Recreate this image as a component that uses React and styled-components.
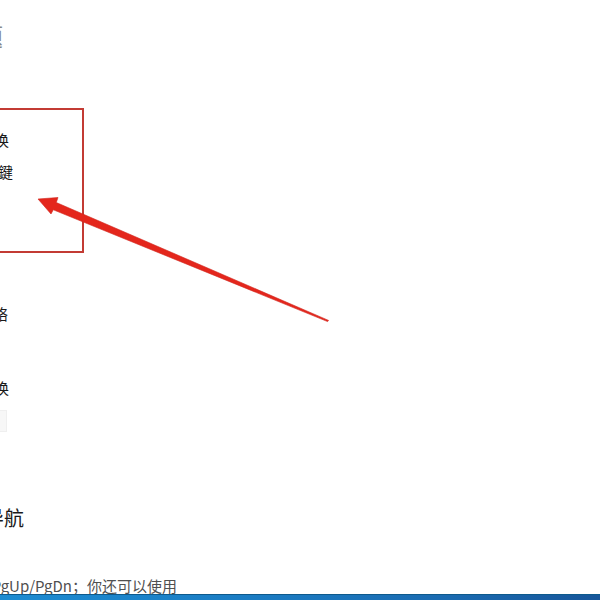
import React from "react";
import styled, { createGlobalStyle } from "styled-components";

const Global = createGlobalStyle`
  html, body { margin: 0; padding: 0; background: #fff; }
  body { font-family: "Microsoft YaHei", "Noto Sans CJK SC", "Liberation Sans", sans-serif; }
`;

const Page = styled.div`
  position: relative;
  width: 600px;
  height: 600px;
  overflow: hidden;
  display: flex;
  flex-direction: column;
  background: #fff;
`;

const Content = styled.div`
  flex: 1;
  display: flex;
  flex-direction: column;
  overflow: hidden;
`;

const Line = styled.div`
  width: ${(p) => p.$end}px;
  height: ${(p) => p.$h}px;
  margin-top: ${(p) => p.$top}px;
  display: flex;
  justify-content: flex-end;
  align-items: center;
  overflow: hidden;
  white-space: nowrap;
  font-size: ${(p) => p.$size}px;
  color: ${(p) => p.$color || "#1a1a1a"};
  line-height: 1;
  flex-shrink: 0;
`;

const Faint = styled.div`
  width: 6px;
  height: 20px;
  margin-top: 14px;
  background: #f7f7f7;
  border: 1px solid #efefef;
  border-left: none;
  flex-shrink: 0;
`;

const TaskBar = styled.div`
  height: 5px;
  flex-shrink: 0;
  background: linear-gradient(90deg, #1d8bd1 0%, #1b7dc4 40%, #1a6ab0 75%, #17569a 100%);
  border-top: 1px solid #0e5a8c;
`;

const Frame = styled.div`
  position: absolute;
  left: -20px;
  top: 108px;
  width: 100px;
  height: 141px;
  border: 2px solid #c33b34;
`;

const ArrowSvg = styled.svg`
  position: absolute;
  left: 0;
  top: 0;
  width: 600px;
  height: 600px;
  pointer-events: none;
`;

export default function App() {
  return (
    <>
      <Global />
      <Page>
        <Content>
          <Line $top={24} $h={24} $end={3} $size={24} $color="#888">常见问题</Line>
          <Line $top={82} $h={18} $end={9} $size={15}>输入法切换</Line>
          <Line $top={14} $h={18} $end={13} $size={15}>中英切换快捷鍵</Line>
          <Line $top={124} $h={18} $end={8} $size={15}>设置网络</Line>
          <Line $top={56} $h={18} $end={9} $size={15}>窗口切换</Line>
          <Faint />
          <Line $top={74} $h={24} $end={24} $size={20}>快捷导航</Line>
          <Line $top={46} $h={18} $end={177} $size={15} $color="#505050">按 PgUp/PgDn；你还可以使用</Line>
        </Content>
        <TaskBar />
        <Frame />
        <ArrowSvg viewBox="0 0 600 600">
          <polygon
            points="38,199 58,197.5 56.3,202.5 328.6,320.4 327.6,321.6 53.3,209.8 51,214"
            fill="#e4261c"
            stroke="#d0271f"
            strokeWidth="0.6"
            strokeLinejoin="round"
          />
        </ArrowSvg>
      </Page>
    </>
  );
}
